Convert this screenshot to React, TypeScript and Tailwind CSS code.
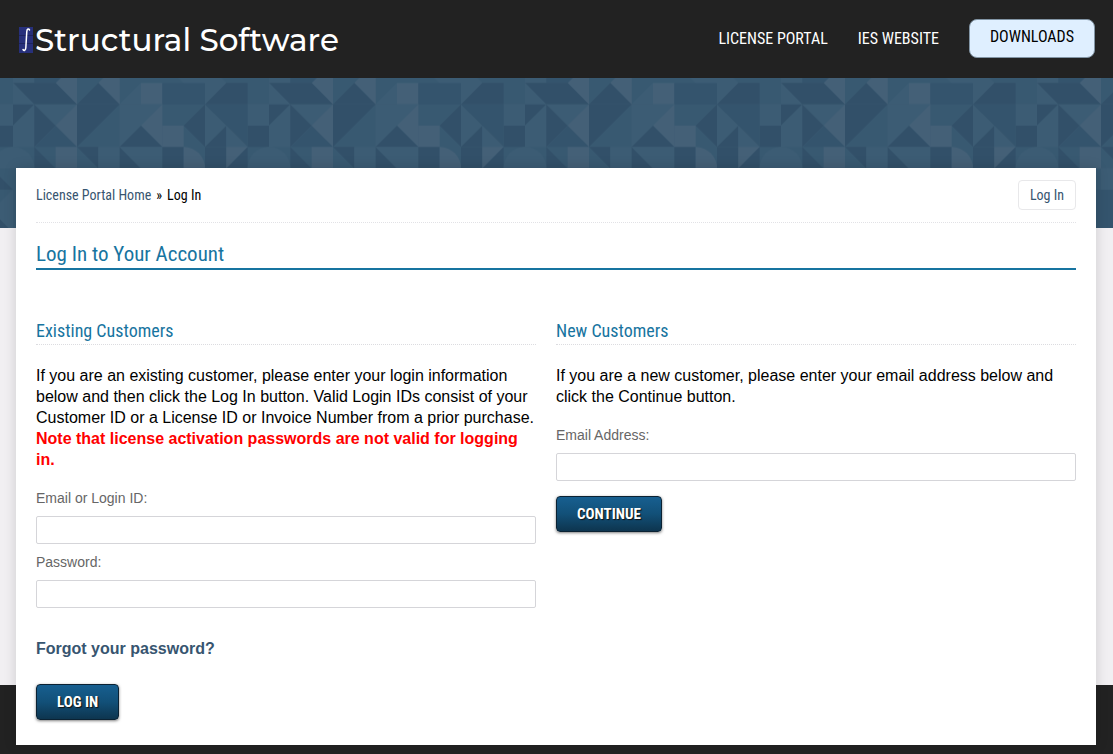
import { useId } from "react";

const DARK = "#325069";
const DEEP = "#34546d";
const BLUE = "#385971";
const MID = "#3c5c74";
const LIGHT = "#446077";

// Each shape lives on a 12-column grid that repeats across the banner
const shapes: [string, string][] = [
  ["0,-1 1,-1 1,0 0,0", MID],
  ["3,-1 3,1 2,0", LIGHT],
  ["5,-1 5,1 4,0", LIGHT],
  ["1,-1 3,-1 2,0 1,0", DEEP],
  ["0,0 2,0 3,1 1,1", DARK],
  ["0,0 1,1 0,1", MID],
  ["3,1 4,0 5,1", DARK],
  ["6,0 7,0 7,1 6,1", LIGHT],
  ["5,1 6,0 6,1", MID],
  ["7,0 9,0 9,1 7,1", DEEP],
  ["7,-1 9,-1 9,0 8,0", MID],
  ["9,-1 10,0 9,1", MID],
  ["9,1 10,0 11,0 11,1", DARK],
  ["11,1 12,1 12,2 11,2", MID],
  ["11,2 12,2 12,3 11,3", DARK],
  ["0,1 1,1 0,2", DARK],
  ["0,2 1,1 1,3 0,3", MID],
  ["1,1 3,1 2,2", MID],
  ["2,2 3,1 3,3", LIGHT],
  ["1,1 2,2 1,3", DARK],
  ["1,3 2,2 3,3", DEEP],
  ["3,1 5,1 3,3", DARK],
  ["5,1 7,1 5,3", MID],
  ["6,2 7,1 7,3", LIGHT],
  ["5,3 6,2 7,3", DARK],
  ["7,2 8,2 8,3 7,3", LIGHT],
  ["8,2 9,1 9,3", DARK],
  ["9,1 10,2 9,3", MID],
  ["9,1 11,1 11,3", DEEP],
  ["9,3 10,2 10,3", DARK],
  ["10,2 11,3 10,3", MID],
  ["1,3 2,4 1,4", DARK],
  ["2,3 3,3 3,4 2,4", LIGHT],
  ["3,3 4,3 4,4", DARK],
  ["4,3 5,3 5,4 4,4", MID],
  ["5,3 6,4 5,4", DARK],
  ["5,3 7,3 7,4 6,4", MID],
  ["7,3 8,3 8,4 7,4", DARK],
  ["9,3 10,3 10,4 9,4", DARK],
  ["10,3 11,3 10,4", LIGHT],
  ["11,3 11,4 10,4", DARK],
  ["3,4 4,4 4,5 3,5", MID],
  ["2,5 4,5 4,7 2,7", DEEP],
  ["11,4 12,5 11,5", DARK],
  ["12,5 12,7 11,6", MID],
  ["11,6 12,7 11,7", DARK],
];

function BannerPattern() {
  const id = useId();

  return (
    <svg className="block h-full w-full" aria-hidden="true">
      <defs>
        <pattern
          id={id}
          width="12"
          height="12"
          patternUnits="userSpaceOnUse"
          patternTransform="translate(13 -16.3) scale(21.333)"
        >
          <g transform="translate(0 1)">
            <rect y="-1" width="12" height="12" fill={BLUE} />
            {shapes.map(([points, fill]) => (
              <polygon key={points} points={points} fill={fill} />
            ))}
            <path d="M0 3a1 1 0 0 1 1 1H0z" fill={MID} />
            <path d="M12 3a1 1 0 0 0-1 1h1z" fill={MID} />
            <path d="M8 3a1 1 0 0 1 1 1H8z" fill={LIGHT} />
          </g>
        </pattern>
      </defs>
      <rect width="100%" height="100%" fill={`url(#${id})`} />
    </svg>
  );
}

function LogoMark() {
  return (
    <svg width="15" height="26" viewBox="0 0 15 26" aria-hidden="true">
      <rect width="14" height="26" fill="#27307b" />
      <path d="M0 8.5h14M0 16.5h14" stroke="#1d2460" />
      <path
        d="M10.5 3C10 1.2 8 1.700 7.800 4.500L6.800 21C6.600 23.500 5 24 4 22.500"
        fill="none"
        stroke="#fff"
        strokeWidth="1.5"
        strokeLinecap="round"
      />
    </svg>
  );
}

const condensed = "font-['Roboto_Condensed','Liberation_Sans_Narrow',Roboto,sans-serif]";

function Field({ id, label, type }: { id: string; label: string; type: string }) {
  return (
    <div>
      <label htmlFor={id} className="block text-sm leading-5 text-[#666]">
        {label}
      </label>
      <input
        id={id}
        type={type}
        className="mt-2 block h-7 w-full rounded-xs border border-[#d5d5d9] bg-white px-2 text-sm outline-none focus:border-[#1774a0]"
      />
    </div>
  );
}

function SubmitButton({ children }: { children: string }) {
  return (
    <button
      type="submit"
      className={`${condensed} block h-9 rounded-sm border border-[#0b2233] bg-linear-to-b from-[#175f90] via-[#125078] to-[#0d354f] px-5 text-[15px] leading-5 font-bold text-white shadow-[0_1px_3px_rgba(0,0,0,0.5)] text-shadow-[1px_1px_1px_#111]`}
    >
      {children}
    </button>
  );
}

function ColumnTitle({ children }: { children: string }) {
  return (
    <h2 className={`${condensed} border-b border-dotted border-[#dcdce0] pb-0.5 text-lg leading-[22px] text-[#1774a0]`}>
      {children}
    </h2>
  );
}

export default function App() {
  return (
    <div className="min-h-screen bg-[linear-gradient(#f1eff2_685px,#222_685px)] font-['Liberation_Sans',Arial,sans-serif] text-base text-black">
      <header className="flex h-[78px] items-center justify-between bg-[#222] pr-[18px] pl-[19px]">
        <a href="#" className="flex items-center gap-px pt-0.5 font-['Montserrat',Inter,sans-serif] text-[31px] leading-10 font-medium text-white">
          <LogoMark />
          Structural Software
        </a>
        <nav className={`${condensed} flex items-center gap-[30px] text-base leading-5 text-white uppercase`}>
          <a href="#">License Portal</a>
          <a href="#">IES Website</a>
          <a href="#" className="mb-0.5 rounded-lg border border-[#8295a5] bg-[#dfefff] px-5 pt-[7px] pb-[10px] text-black">
            Downloads
          </a>
        </nav>
      </header>

      <div className="h-[150px]">
        <BannerPattern />
      </div>

      <main className="relative mx-4 -mt-[60px] mr-[17px] bg-white px-5 pt-3 pb-[25px] shadow-[0_0_12px_rgba(0,0,0,0.15)]">
        <div className={`${condensed} flex items-center justify-between border-b border-dotted border-[#e2e2e6] pb-3 text-sm leading-5`}>
          <nav className="flex gap-[5px]">
            <a href="#" className="text-[#375570]">License Portal Home</a>
            <span>»</span>
            <span>Log In</span>
          </nav>
          <a href="#" className="rounded-sm border border-[#e8e8ea] px-[11px] py-1 text-[#375570]">
            Log In
          </a>
        </div>

        <h1 className={`${condensed} mt-[19px] border-b-2 border-[#1774a0] pb-[2px] text-[21px] leading-6 text-[#1774a0]`}>
          Log In to Your Account
        </h1>

        <div className="mt-[50px] grid grid-cols-[25fr_26fr] gap-5">
          <form onSubmit={(e) => e.preventDefault()}>
            <ColumnTitle>Existing Customers</ColumnTitle>
            <p className="mt-5 leading-[21px]">
              If you are an existing customer, please enter your login information below and then click the Log In
              button. Valid Login IDs consist of your Customer ID or a License ID or Invoice Number from a prior
              purchase. <strong className="text-[#ff0000]">Note that license activation passwords are not valid for logging in.</strong>
            </p>
            <div className="mt-[18px] flex flex-col gap-2">
              <Field id="login" label="Email or Login ID:" type="text" />
              <Field id="password" label="Password:" type="password" />
            </div>
            <a href="#" className="mt-[30px] mb-[25px] block leading-[21px] font-bold text-[#375570]">
              Forgot your password?
            </a>
            <SubmitButton>LOG IN</SubmitButton>
          </form>

          <form onSubmit={(e) => e.preventDefault()}>
            <ColumnTitle>New Customers</ColumnTitle>
            <p className="mt-5 mb-[18px] leading-[21px]">
              If you are a new customer, please enter your email address below and click the Continue button.
            </p>
            <Field id="email" label="Email Address:" type="email" />
            <div className="mt-[15px]">
              <SubmitButton>CONTINUE</SubmitButton>
            </div>
          </form>
        </div>
      </main>
    </div>
  );
}
